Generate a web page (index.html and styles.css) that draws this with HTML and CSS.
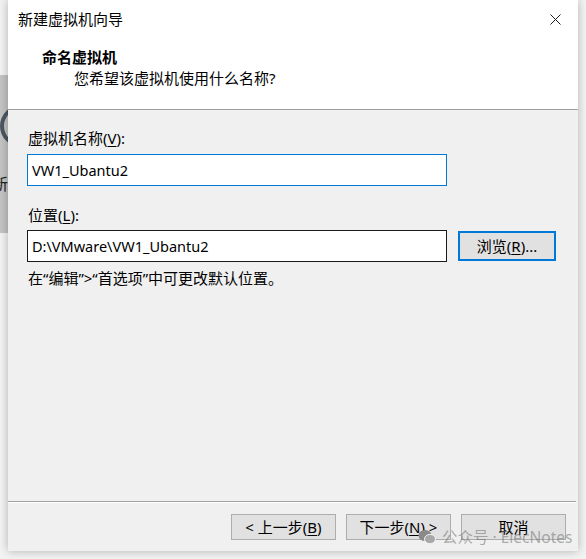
FILE: index.html
```html
<!DOCTYPE html>
<html lang="zh-CN">

<head>
    <meta charset="UTF-8">
    <title>新建虚拟机向导</title>
    <link rel="stylesheet" href="styles.css">
</head>

<body>
    <!-- 对话框后面的窗口露出的一小条 -->
    <div class="behind">
        <div class="behind-ring"></div>
        <div class="behind-text">新</div>
    </div>

    <div class="dialog">
        <div class="header">
            <div class="titlebar">
                <span class="title">新建虚拟机向导</span>
                <svg class="close" width="11" height="11" viewBox="0 0 11 11">
                    <path d="M0.5 0.5 L10.5 10.5 M10.5 0.5 L0.5 10.5" stroke="#1a1a1a" stroke-width="1" fill="none" />
                </svg>
            </div>
            <div class="heading">命名虚拟机</div>
            <div class="subheading">您希望该虚拟机使用什么名称?</div>
        </div>

        <div class="content">
            <div class="label">虚拟机名称(<u>V</u>):</div>
            <div class="field field-focus">VW1_Ubantu2</div>

            <div class="label label-gap">位置(<u>L</u>):</div>
            <div class="row">
                <div class="field">D:\VMware\VW1_Ubantu2</div>
                <div class="button button-default">浏览(<u>R</u>)...</div>
            </div>
            <div class="hint">在“编辑”&gt;“首选项”中可更改默认位置。</div>
        </div>

        <div class="footer">
            <div class="footer-line"></div>
            <div class="buttons">
                <div class="button">&lt; 上一步(<u>B</u>)</div>
                <div class="button">下一步(<u>N</u>) &gt;</div>
                <div class="button">取消</div>
            </div>
        </div>
    </div>

    <div class="watermark">
        <svg width="18" height="16" viewBox="0 0 18 16">
            <ellipse cx="7" cy="6.5" rx="6.5" ry="5.5" fill="#8a8a8a" />
            <ellipse cx="12" cy="10" rx="5.5" ry="4.6" fill="#a8a8a8" stroke="#f0f0f0" stroke-width="1" />
        </svg>
        <span>公众号 · ElecNotes</span>
    </div>
</body>

</html>
```

FILE: styles.css
```css
body {
    margin: 0;
    width: 586px;
    height: 559px;
    overflow: hidden;
    position: relative;
    background: #f3f3f3;
    font-family: "Noto Sans", "Noto Sans CJK SC", sans-serif;
    font-size: 15px;
    color: #000;
}

u {
    text-underline-offset: 2px;
}

.behind {
    position: absolute;
    left: 0;
    top: 75px;
    width: 8px;
    height: 158px;
    background: #c4c4c4;
    overflow: hidden;
}

.behind-ring {
    position: absolute;
    left: 0;
    top: 30px;
    width: 34px;
    height: 34px;
    border: 4px solid #4b5762;
    border-radius: 50%;
}

.behind-text {
    position: absolute;
    left: -8px;
    top: 99px;
    font-size: 16px;
    line-height: 20px;
    color: #222;
}

.dialog {
    position: relative;
    margin-left: 8px;
    width: 570px;
    height: 551px;
    background: #f0f0f0;
    box-shadow: 0 0 9px rgba(0, 0, 0, 0.28);
    display: flex;
    flex-direction: column;
}

.header {
    background: #fff;
    height: 110px;
    border-bottom: 1px solid #a0a0a0;
    box-sizing: border-box;
}

.titlebar {
    height: 38px;
    padding: 0 17px 0 10px;
    display: flex;
    align-items: center;
    justify-content: space-between;
}

.title {
    line-height: 20px;
}

.heading {
    margin-top: 9px;
    padding-left: 34px;
    font-weight: 700;
    line-height: 20px;
}

.subheading {
    margin-top: 1px;
    padding-left: 66px;
    line-height: 20px;
}

.content {
    flex: 1;
    padding: 18px 0 0 19px;
}

.label {
    margin-left: 1px;
    line-height: 20px;
}

.label-gap {
    margin-top: 19px;
}

.field {
    margin-top: 6px;
    width: 420px;
    height: 32px;
    box-sizing: border-box;
    border: 1px solid #1a1a1a;
    background: #fff;
    padding: 0 4px;
    display: flex;
    align-items: center;
    font-size: 14.5px;
}

.field-focus {
    border-color: #0078d7;
}

.row {
    margin-top: 5px;
    display: flex;
    align-items: center;
    gap: 11px;
}

.row .field {
    margin-top: 0;
}

.hint {
    margin-top: 6px;
    margin-left: 1px;
    line-height: 20px;
}

.button {
    width: 105px;
    height: 26px;
    box-sizing: border-box;
    border: 1px solid #adadad;
    background: #e1e1e1;
    display: flex;
    align-items: center;
    justify-content: center;
    line-height: 20px;
}

.button-default {
    width: 98px;
    height: 30px;
    border: 2px solid #0078d7;
}

.footer {
    padding-bottom: 11px;
}

.footer-line {
    margin-right: 2px;
    height: 1px;
    background: #a0a0a0;
    border-bottom: 1px solid #fff;
}

.buttons {
    margin-top: 11px;
    padding-right: 12px;
    display: flex;
    justify-content: flex-end;
    gap: 10px;
}

.watermark {
    position: absolute;
    left: 418px;
    top: 527px;
    display: flex;
    align-items: center;
    gap: 6px;
    white-space: nowrap;
    font-size: 15.5px;
    line-height: 20px;
    color: rgba(110, 110, 110, 0.55);
}
```
